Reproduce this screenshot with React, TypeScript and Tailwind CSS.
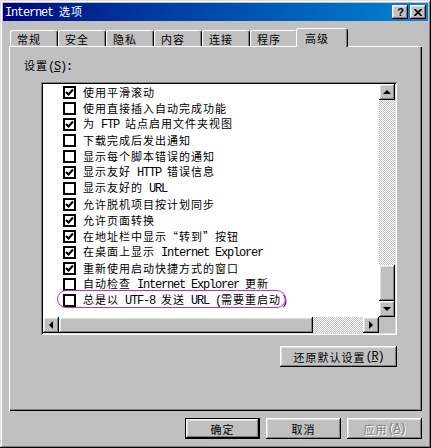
import React from 'react';

const raised = 'shadow-[inset_-1px_-1px_#000,inset_1px_1px_#fff,inset_-2px_-2px_#808080,inset_2px_2px_#dfdfdf]';
const sunken = 'shadow-[inset_1px_1px_#808080,inset_-1px_-1px_#fff,inset_2px_2px_#000,inset_-2px_-2px_#dfdfdf]';
const dither = 'bg-[repeating-conic-gradient(#c0c0c0_0%_25%,#ffffff_0%_50%)] bg-[length:2px_2px]';
const mono = "[font-family:'Liberation_Mono',monospace] text-[12px] tracking-[-1.2px] whitespace-pre";

// SimSun style: half-width latin runs get a mono face
const Txt: React.FC<{ s: string }> = ({ s }) => (
  <>
    {s.split(/([\x00-\x7F]+)/).map((part, i) =>
      /^[\x00-\x7F]+$/.test(part) ? (
        <span key={i} className={mono}>
          {part}
        </span>
      ) : (
        <span key={i}>{part}</span>
      )
    )}
  </>
);

const items: Array<{ label: string; checked: boolean }> = [
  { label: '使用平滑滚动', checked: true },
  { label: '使用直接插入自动完成功能', checked: false },
  { label: '为 FTP 站点启用文件夹视图', checked: true },
  { label: '下载完成后发出通知', checked: false },
  { label: '显示每个脚本错误的通知', checked: false },
  { label: '显示友好 HTTP 错误信息', checked: true },
  { label: '显示友好的 URL', checked: false },
  { label: '允许脱机项目按计划同步', checked: true },
  { label: '允许页面转换', checked: true },
  { label: '在地址栏中显示“转到”按钮', checked: true },
  { label: '在桌面上显示 Internet Explorer', checked: true },
  { label: '重新使用启动快捷方式的窗口', checked: true },
  { label: '自动检查 Internet Explorer 更新', checked: false },
  { label: '总是以 UTF-8 发送 URL (需要重启动)', checked: false },
];

const tabs = ['常规', '安全', '隐私', '内容', '连接', '程序'];

const Arrow: React.FC<{ dir: 'up' | 'down' | 'left' | 'right' }> = ({ dir }) => {
  const pts = {
    up: '4,1 0,5 8,5',
    down: '0,1 8,1 4,5',
    left: '5,0 5,8 1,4',
    right: '1,0 1,8 5,4',
  }[dir];
  const horiz = dir === 'left' || dir === 'right';
  return (
    <svg width={horiz ? 6 : 8} height={horiz ? 8 : 6} viewBox={horiz ? '0 0 6 8' : '0 0 8 6'}>
      <polygon points={pts} fill="#000" />
    </svg>
  );
};

const Check: React.FC<{ checked: boolean }> = ({ checked }) => (
  <div className="w-[13px] h-[13px] shrink-0 bg-white border-2 border-black flex items-center justify-center">
    {checked && (
      <svg width="9" height="9" viewBox="0 0 9 9">
        <path d="M1 4 L3.5 6.5 L8 1.5" stroke="#000" strokeWidth="2.2" fill="none" />
      </svg>
    )}
  </div>
);

const Button: React.FC<{ children: React.ReactNode; w: string; def?: boolean; disabled?: boolean }> = ({ children, w, def, disabled }) => (
  <div className={`${w} h-[21px] ${def ? 'border border-black' : ''} flex`}>
    <div
      className={`flex-1 flex items-center justify-center ${raised} ${
        disabled ? 'text-[#808080] [text-shadow:1px_1px_#fff]' : 'text-black'
      }`}
    >
      {children}
    </div>
  </div>
);

export default function App() {
  return (
    <div
      className={`w-[431px] h-[448px] bg-[#c0c0c0] p-[3px] flex flex-col text-[11px] tracking-[1px] leading-[16px] text-black [font-family:'Noto_Sans_CJK_SC',sans-serif] shadow-[inset_-1px_-1px_#000,inset_1px_1px_#dfdfdf,inset_-2px_-2px_#808080,inset_2px_2px_#fff]`}
      lang="zh-CN"
    >
      {/* title bar */}
      <div className="h-[18px] shrink-0 bg-linear-to-r from-[#000080] to-[#1084d0] flex items-center justify-between pl-[2px] pr-[2px]">
        <div className="text-white">
          <Txt s="Internet 选项" />
        </div>
        <div className="flex gap-[2px]">
          <div className={`w-[16px] h-[14px] bg-[#c0c0c0] ${raised} flex items-center justify-center`}>
            <span className="[font-family:'Liberation_Sans',sans-serif] font-bold text-[11px] tracking-normal leading-none pl-[1px]">?</span>
          </div>
          <div className={`w-[16px] h-[14px] bg-[#c0c0c0] ${raised} flex items-center justify-center`}>
            <svg width="8" height="7" viewBox="0 0 8 7">
              <path d="M0.5 0 L7.5 7 M7.5 0 L0.5 7" stroke="#000" strokeWidth="1.6" />
            </svg>
          </div>
        </div>
      </div>

      <div className="flex-1 flex flex-col px-[6px]">
        {/* tab strip */}
        <div className="h-[18px] mt-[7px] flex items-end pl-[1px]">
          {tabs.map((t) => (
            <div
              key={t}
              className="w-[48px] h-[16px] flex items-center pl-[6px] border-l border-t border-white border-r border-r-black rounded-t-[3px] shadow-[inset_-1px_0_#808080]"
            >
              {t}
            </div>
          ))}
          <div className="relative z-10 -ml-[2px] -mb-[1px] w-[52px] h-[19px] bg-[#c0c0c0] flex items-center pl-[8px] pb-[1px] border-l border-t border-white border-r border-r-black rounded-t-[3px] shadow-[inset_-1px_0_#808080]">
            高级
          </div>
        </div>

        {/* tab panel */}
        <div className="h-[365px] flex flex-col pl-[15px] shadow-[inset_1px_1px_#fff,inset_-1px_-1px_#000,inset_-2px_-2px_#808080]">
          <div className="mt-[11px]">
            设置<span className={mono}>(<u>S</u>):</span>
          </div>
          <div className="ml-[17px] w-[356px] flex flex-col">
            {/* list box */}
            <div className={`mt-[7px] h-[253px] bg-white p-[2px] flex flex-col ${sunken}`}>
              <div className="flex-1 flex min-h-0">
                <div className="flex-1 relative overflow-hidden">
                  {items.map((it, i) => (
                    <div key={i} className="relative h-[16px] flex items-center pl-[20px] whitespace-nowrap">
                      <Check checked={it.checked} />
                      <span className="ml-[7px]">
                        <Txt s={it.label} />
                      </span>
                      {i === items.length - 1 && (
                        <div className="absolute left-[14px] -top-[2px] w-[229px] h-[18px] rounded-full border border-[#c030c0]" />
                      )}
                    </div>
                  ))}
                </div>
                {/* vertical scrollbar */}
                <div className="w-[16px] flex flex-col">
                  <div className={`h-[16px] bg-[#c0c0c0] ${raised} flex items-center justify-center`}>
                    <Arrow dir="up" />
                  </div>
                  <div className={`flex-1 ${dither}`} />
                  <div className={`h-[36px] bg-[#c0c0c0] ${raised}`} />
                  <div className={`h-[16px] bg-[#c0c0c0] ${raised} flex items-center justify-center`}>
                    <Arrow dir="down" />
                  </div>
                </div>
              </div>
              {/* horizontal scrollbar */}
              <div className="h-[16px] flex">
                <div className={`w-[16px] bg-[#c0c0c0] ${raised} flex items-center justify-center`}>
                  <Arrow dir="left" />
                </div>
                <div className={`w-[254px] bg-[#c0c0c0] ${raised}`} />
                <div className={`flex-1 ${dither}`} />
                <div className={`w-[16px] bg-[#c0c0c0] ${raised} flex items-center justify-center`}>
                  <Arrow dir="right" />
                </div>
                <div className="w-[16px] bg-[#c0c0c0]" />
              </div>
            </div>
            <div className="mt-[11px] self-end">
              <Button w="w-[117px]">
                还原默认设置<span className={mono}>(<u>R</u>)</span>
              </Button>
            </div>
          </div>
        </div>

        {/* dialog buttons */}
        <div className="mt-[7px] flex justify-end gap-[6px]">
          <Button w="w-[75px]" def>
            确定
          </Button>
          <Button w="w-[75px]">取消</Button>
          <Button w="w-[75px]" disabled>
            应用<span className={mono}>(<u>A</u>)</span>
          </Button>
        </div>
      </div>
    </div>
  );
}
